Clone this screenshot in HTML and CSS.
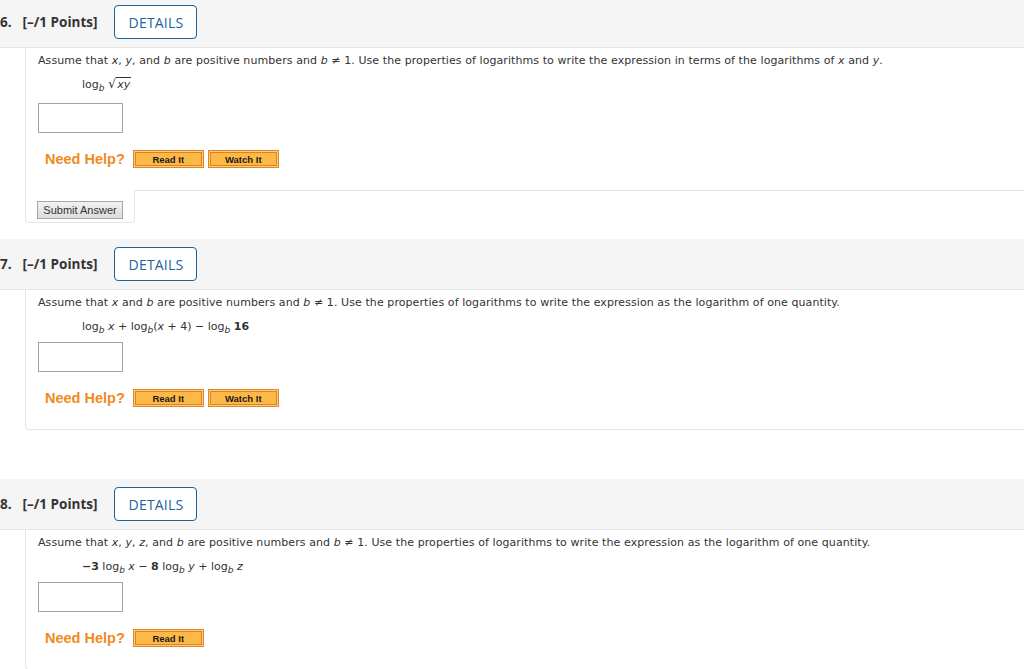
FILE: index.html
```html
<!DOCTYPE html>
<html>
<head>
<meta charset="utf-8">
<link rel="stylesheet" href="styles.css">
</head>
<body>
<div class="page">

<section class="q">
  <div class="q-head">
    <span class="q-num">6.</span><span class="q-pts">[–/1 Points]</span>
    <button class="details">DETAILS</button>
  </div>
  <div class="q-body">
    <p class="prompt">Assume that <i>x</i>, <i>y</i>, and <i>b</i> are positive numbers and <i>b</i> ≠ 1. Use the properties of logarithms to write the expression in terms of the logarithms of <i>x</i> and <i>y</i>.</p>
    <div class="expr">log<sub><i>b</i></sub> <span class="sqrt"><span class="rad">√</span><span class="radicand"><i>xy</i></span></span></div>
    <div class="answer"><span class="box"></span></div>
    <div class="help"><span class="need">Need Help?</span><span class="hbtn">Read It</span><span class="hbtn">Watch It</span></div>
  </div>
  <div class="q-foot">
    <div class="tab"><button class="submit">Submit Answer</button></div>
    <div class="fill"></div>
  </div>
</section>

<section class="q">
  <div class="q-head">
    <span class="q-num">7.</span><span class="q-pts">[–/1 Points]</span>
    <button class="details">DETAILS</button>
  </div>
  <div class="q-body closed">
    <p class="prompt">Assume that <i>x</i> and <i>b</i> are positive numbers and <i>b</i> ≠ 1. Use the properties of logarithms to write the expression as the logarithm of one quantity.</p>
    <div class="expr">log<sub><i>b</i></sub> <i>x</i> + log<sub><i>b</i></sub>(<i>x</i> + 4) − log<sub><i>b</i></sub> <b>16</b></div>
    <div class="answer tight"><span class="box"></span></div>
    <div class="help"><span class="need">Need Help?</span><span class="hbtn">Read It</span><span class="hbtn">Watch It</span></div>
  </div>
  <div class="q-foot empty"></div>
</section>

<section class="q">
  <div class="q-head">
    <span class="q-num">8.</span><span class="q-pts">[–/1 Points]</span>
    <button class="details">DETAILS</button>
  </div>
  <div class="q-body closed">
    <p class="prompt">Assume that <i>x</i>, <i>y</i>, <i>z</i>, and <i>b</i> are positive numbers and <i>b</i> ≠ 1. Use the properties of logarithms to write the expression as the logarithm of one quantity.</p>
    <div class="expr"><b>−3</b> log<sub><i>b</i></sub> <i>x</i> − <b>8</b> log<sub><i>b</i></sub> <i>y</i> + log<sub><i>b</i></sub> <i>z</i></div>
    <div class="answer tight"><span class="box"></span></div>
    <div class="help"><span class="need">Need Help?</span><span class="hbtn">Read It</span></div>
  </div>
  <div class="q-foot empty"></div>
</section>

</div>
</body>
</html>
```
FILE: styles.css
```css
html, body {
  margin: 0;
  padding: 0;
  background: #ffffff;
}
.page {
  margin-top: -3px;
  overflow: hidden;
}
.q {
  margin-bottom: 16px;
}
.q-head {
  display: flex;
  align-items: center;
  height: 50px;
  padding: 0;
  background: #f5f5f5;
  border-bottom: 1px solid #e5e5e5;
  font-family: "Open Sans", sans-serif;
  font-weight: 700;
  font-size: 13.5px;
  color: #333333;
}
.q-num {
  margin-left: 0;
  margin-right: 11px;
}
.q-pts {
  margin-right: 17px;
}
.details {
  box-sizing: border-box;
  width: 83px;
  height: 34px;
  border: 1px solid #1c6397;
  border-radius: 4px;
  background: #ffffff;
  font-family: "Open Sans", sans-serif;
  font-size: 14px;
  font-weight: 400;
  color: #1a659d;
  padding: 0;
  letter-spacing: 0.2px;
}
.q-body {
  margin-left: 25px;
  border-left: 1px solid #e6e6e6;
  padding: 4px 0 22px 12px;
  font-family: "DejaVu Sans", Verdana, sans-serif;
  font-size: 11px;
  color: #333333;
}
.q-body.closed {
  border-bottom: 1px solid #e6e6e6;
  border-bottom-left-radius: 4px;
  padding-bottom: 22px;
}
.prompt {
  margin: 0;
  line-height: 18px;
  letter-spacing: 0.08px;
}
.prompt i, .expr i {
  font-family: "DejaVu Sans", sans-serif;
  font-style: italic;
}
.expr {
  margin-top: 6px;
  margin-left: 44px;
  line-height: 18px;
  color: #333333;
}
.expr sub {
  font-size: 9px;
  vertical-align: -3px;
  line-height: 0;
}
.expr b {
  font-weight: 700;
}
.sqrt {
  display: inline-flex;
  align-items: flex-end;
}
.rad {
  font-size: 13px;
  line-height: 14px;
}
.radicand {
  border-top: 1px solid #333;
  line-height: 13px;
  padding: 0 1px;
}
.answer {
  margin-top: 9px;
  height: 30px;
}
.answer.tight {
  margin-top: 6px;
}
.box {
  display: block;
  box-sizing: border-box;
  width: 85px;
  height: 30px;
  border: 1px solid #a3a3a3;
  background: #ffffff;
}
.help {
  display: flex;
  align-items: center;
  margin-top: 17px;
  margin-left: 7px;
  height: 18px;
}
.need {
  font-family: "Liberation Sans", Arial, sans-serif;
  font-weight: 700;
  font-size: 14.5px;
  color: #f08a1e;
  margin-right: 8px;
}
.hbtn {
  box-sizing: border-box;
  display: inline-flex;
  align-items: center;
  justify-content: center;
  width: 71px;
  height: 18px;
  margin-right: 4px;
  background: #fdb947;
  border: 1px solid #e3842a;
  box-shadow: inset 0 0 0 1px #fdcf7d, inset 0 0 0 2px #d98322;
  font-family: "Liberation Sans", Arial, sans-serif;
  font-weight: 700;
  font-size: 9.5px;
  color: #1a1a1a;
}
.q-foot {
  display: flex;
  height: 33px;
}
.tab {
  box-sizing: border-box;
  width: 110px;
  margin-left: 25px;
  border-left: 1px solid #e6e6e6;
  border-right: 1px solid #e6e6e6;
  border-bottom: 1px solid #e6e6e6;
  border-bottom-left-radius: 4px;
  border-bottom-right-radius: 4px;
  padding: 10px 0 0 11px;
}
.fill {
  flex: 1;
  border-top: 1px solid #e6e6e6;
}
.submit {
  box-sizing: border-box;
  width: 86px;
  height: 18px;
  padding: 0;
  border: 1px solid #a6a6a6;
  background: linear-gradient(#f2f2f2, #dcdcdc);
  font-family: "Liberation Sans", Arial, sans-serif;
  font-size: 11px;
  color: #333333;
}
```
